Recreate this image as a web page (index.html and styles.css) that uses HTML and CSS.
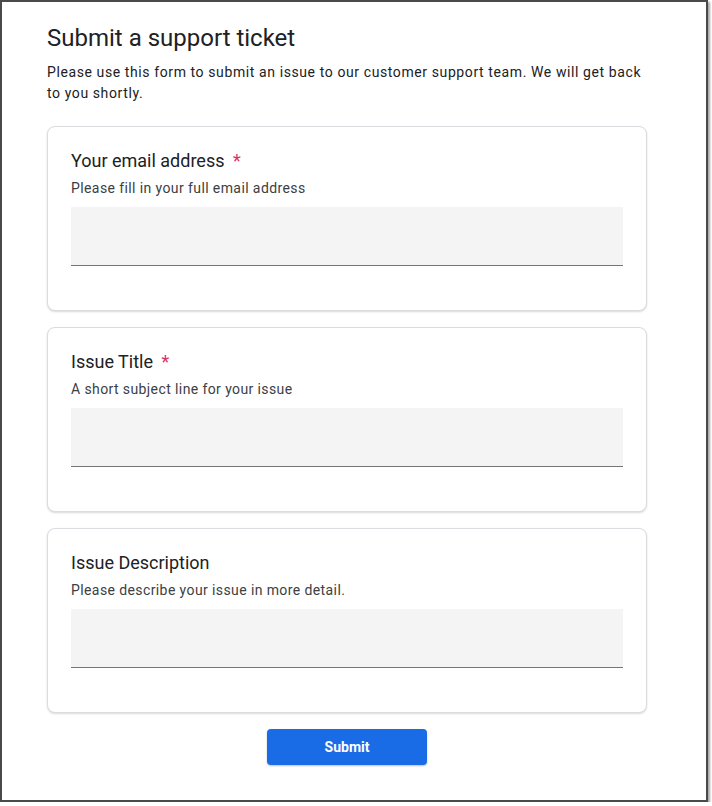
FILE: index.html
```html
<!DOCTYPE html>
<html lang="en">
<head>
<meta charset="utf-8">
<title>Submit a support ticket</title>
<link rel="stylesheet" href="styles.css">
</head>
<body>
<div class="frame">
  <div class="content">
    <h1 class="title">Submit a support ticket</h1>
    <p class="intro">Please use this form to submit an issue to our customer support team. We will get back to you shortly.</p>

    <div class="card">
      <div class="label">Your email address <span class="req">*</span></div>
      <div class="help">Please fill in your full email address</div>
      <div class="input"></div>
    </div>

    <div class="card">
      <div class="label">Issue Title <span class="req">*</span></div>
      <div class="help">A short subject line for your issue</div>
      <div class="input"></div>
    </div>

    <div class="card">
      <div class="label">Issue Description</div>
      <div class="help">Please describe your issue in more detail.</div>
      <div class="input"></div>
    </div>

    <div class="actions">
      <button class="submit" type="button">Submit</button>
    </div>
  </div>
</div>
</body>
</html>
```

FILE: styles.css
```css
* { box-sizing: border-box; }
html, body { margin: 0; padding: 0; background: #ffffff; }
body { font-family: Roboto, "Liberation Sans", sans-serif; color: #202124; }

.frame {
  width: 708px;
  height: 802px;
  border: 2px solid #4a4a4a;
  box-shadow: 2px 2px 2px rgba(0,0,0,0.35);
  background: #fff;
}

.content {
  width: 600px;
  margin-left: 45px;
  padding-top: 20px;
}

.title {
  margin: 0;
  font-size: 24px;
  line-height: 32px;
  font-weight: 400;
  color: #202124;
}

.intro {
  margin: 8px 0 0;
  font-size: 14px;
  line-height: 21px;
  color: #202124;
  letter-spacing: 0.6px;
}

.card {
  margin-top: 16px;
  height: 185px;
  border: 1px solid #dadce0;
  border-radius: 8px;
  box-shadow: 0 1px 2px rgba(0,0,0,0.15);
  padding: 22px 23px 0;
  background: #fff;
}
.intro + .card { margin-top: 22px; }

.label {
  font-size: 18px;
  line-height: 24px;
  color: #202124;
}
.req { color: #d93261; margin-left: 4px; }

.help {
  margin-top: 5px;
  font-size: 14px;
  line-height: 20px;
  color: #3c4043;
  letter-spacing: 0.4px;
}

.input {
  margin-top: 9px;
  height: 59px;
  background: #f4f4f4;
  border-bottom: 1px solid #757575;
}

.actions {
  display: flex;
  justify-content: center;
  margin-top: 16px;
}

.submit {
  width: 160px;
  height: 36px;
  border: none;
  border-radius: 4px;
  background: #1a6ce6;
  color: #fff;
  font-family: Roboto, "Liberation Sans", sans-serif;
  font-weight: 700;
  font-size: 14px;
  box-shadow: 0 1px 2px rgba(0,0,0,0.25);
}
```
